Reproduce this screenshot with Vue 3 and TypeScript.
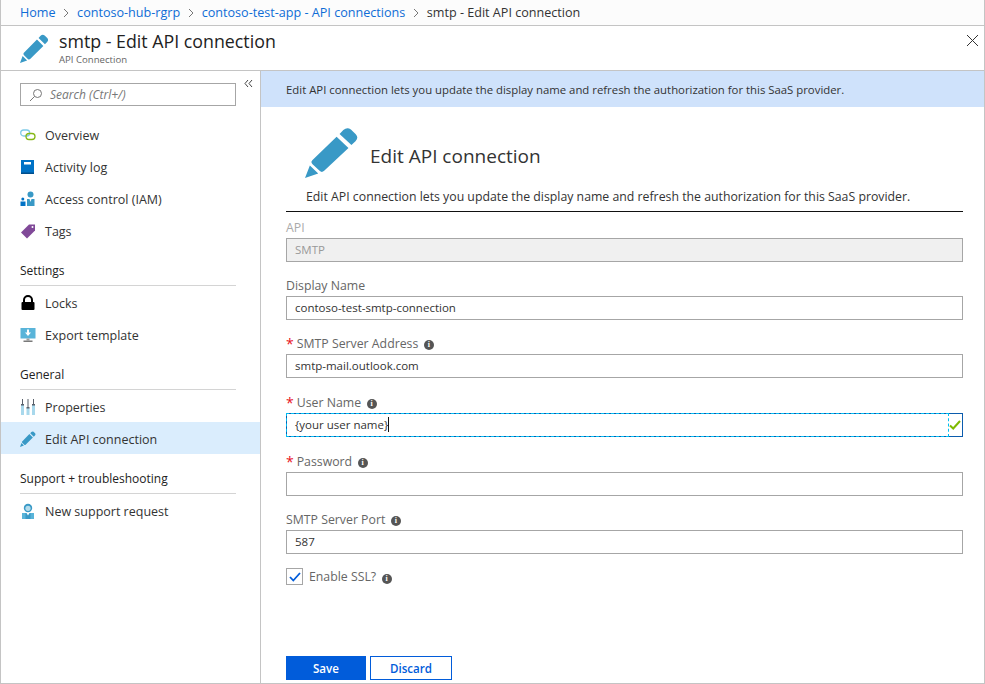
<script setup lang="ts">
const crumbs = ['Home', 'contoso-hub-rgrp', 'contoso-test-app - API connections']
const pencil = 'M14.2 1.2 Q15.6 -0.1 17 1 L18.8 2.8 Q20 4.2 18.7 5.6 L17.2 7.1 L12.8 2.7 Z M11.7 3.8 L16.1 8.2 L7 17.3 Q6.2 18 5.4 17.2 L2.8 14.6 Q2 13.8 2.7 13 Z M1.8 15.1 L4.9 18.2 L0 20 Z'
const fields = [
  { label: 'Display Name', value: 'contoso-test-smtp-connection', req: false, info: false, tight: true },
  { label: 'SMTP Server Address', value: 'smtp-mail.outlook.com', req: true, info: true, tight: true },
]
const fields2 = [
  { label: 'Password', value: '', req: true, info: true, tight: false },
  { label: 'SMTP Server Port', value: '587', req: false, info: true, tight: true },
]
</script>

<template>
  <div class="page">
    <nav class="crumbs">
      <template v-for="c in crumbs" :key="c">
        <a class="crumb">{{ c }}</a>
        <svg class="chev" width="6" height="10" viewBox="0 0 6 10"><path d="M1 1l4 4-4 4" fill="none" stroke="#777" stroke-width="1" /></svg>
      </template>
      <span class="crumb-cur">smtp - Edit API connection</span>
    </nav>
    <header class="head">
      <svg class="head-icon" width="29" height="29" viewBox="0 0 20 20"><path :d="pencil" fill="#3999c6" /></svg>
      <div class="head-text">
        <div class="head-title">smtp - Edit API connection</div>
        <div class="head-sub">API Connection</div>
      </div>
      <svg class="close" width="13" height="13" viewBox="0 0 13 13"><path d="M1 1l11 11M12 1L1 12" stroke="#333" stroke-width="1" fill="none" /></svg>
    </header>
    <div class="body">
      <aside class="side">
        <div class="search-row">
          <div class="search">
            <svg width="14" height="14" viewBox="0 0 14 14"><circle cx="8.5" cy="5.5" r="4" fill="none" stroke="#777" /><path d="M5.5 8.5L1 13" stroke="#777" /></svg>
            <span>Search (Ctrl+/)</span>
          </div>
          <svg class="collapse" width="9" height="9" viewBox="0 0 9 9"><path d="M4 1L1 4.500l3 3.500M8 1L5 4.500l3 3.500" fill="none" stroke="#444" /></svg>
        </div>
        <div class="item first">
          <svg class="ic" width="16" height="16" viewBox="0 0 16 16"><rect x="0.700" y="3" width="9" height="6" rx="3" fill="none" stroke="#7fcbe8" stroke-width="1.300" /><rect x="6" y="6.500" width="9" height="6" rx="3" fill="none" stroke="#86b817" stroke-width="1.300" /></svg>
          <span>Overview</span>
        </div>
        <div class="item">
          <svg class="ic" width="16" height="16" viewBox="0 0 16 16"><rect x="1" y="1" width="13" height="14" fill="#0072c6" /><rect x="1" y="13.500" width="13" height="1.500" fill="#004e8c" /><rect x="4" y="3" width="7" height="2.500" fill="#fff" /></svg>
          <span>Activity log</span>
        </div>
        <div class="item">
          <svg class="ic" width="16" height="16" viewBox="0 0 16 16"><circle cx="10.500" cy="3.500" r="3" fill="#3999c6" /><path d="M7 8h7.500v7H7z" fill="#3999c6" /><path d="M9.500 8h2l-1 3z" fill="#fff" /><circle cx="2.800" cy="8" r="1.500" fill="#0072c6" /><path d="M0.500 10.500h5v4.500h-5z" fill="#0072c6" /></svg>
          <span>Access control (IAM)</span>
        </div>
        <div class="item">
          <svg class="ic" width="16" height="16" viewBox="0 0 16 16"><path d="M1 9.500L9 1.500h6v6L7 15.500z" fill="#804998" /><circle cx="12.500" cy="4" r="1" fill="#fff" /></svg>
          <span>Tags</span>
        </div>

        <div class="group">Settings</div>
        <div class="item">
          <svg class="ic" width="16" height="16" viewBox="0 0 16 16"><path d="M4 7V5a4 4 0 018 0v2" fill="none" stroke="#000" stroke-width="2" /><rect x="1.500" y="7" width="13" height="8" rx="1" fill="#000" /></svg>
          <span>Locks</span>
        </div>
        <div class="item">
          <svg class="ic" width="16" height="16" viewBox="0 0 16 16"><rect x="0.500" y="1" width="15" height="10.500" fill="#59b4d9" /><rect x="6.500" y="11.500" width="3" height="2" fill="#a0a1a2" /><rect x="3.500" y="13.500" width="9" height="1.500" fill="#7a7a7a" /><path d="M7 2.500h2v3h2L8 9 5 5.500h2z" fill="#fff" /></svg>
          <span>Export template</span>
        </div>

        <div class="group">General</div>
        <div class="item">
          <svg class="ic" width="16" height="16" viewBox="0 0 16 16"><path d="M1 6h3v10H1zM6.500 9h3v7h-3zM12 6h3v10h-3z" fill="#a8d8ec" /><path d="M2 0h1v6H2zM7.500 0h1v9h-1zM13 0h1v6h-1z" fill="#59606b" /><path d="M1 5h3v1.500H1zM6.500 8h3v1.500h-3zM12 5h3v1.500h-3z" fill="#59606b" /></svg>
          <span>Properties</span>
        </div>
        <div class="item active">
          <svg class="ic" width="16" height="16" viewBox="0 0 20 20"><path :d="pencil" fill="#3999c6" /></svg>
          <span>Edit API connection</span>
        </div>

        <div class="group">Support + troubleshooting</div>
        <div class="item">
          <svg class="ic" width="16" height="16" viewBox="0 0 16 16"><path d="M2 10h12v6H2z" fill="#59b4d9" /><path d="M5.500 10h5v6h-5z" fill="#3999c6" /><circle cx="8" cy="5" r="4.200" fill="#3999c6" /><circle cx="8" cy="5.300" r="2.600" fill="#b3dcec" /><path d="M6.500 10h3L8 12.500z" fill="#fff" /></svg>
          <span>New support request</span>
        </div>
      </aside>

      <main class="main">
        <div class="banner">Edit API connection lets you update the display name and refresh the authorization for this SaaS provider.</div>
        <div class="form">
          <div class="hero">
            <svg width="54" height="51" viewBox="0 0 20 20" preserveAspectRatio="none"><path :d="pencil" fill="#3999c6" /></svg>
            <h1>Edit API connection</h1>
          </div>
          <p class="desc">Edit API connection lets you update the display name and refresh the authorization for this SaaS provider.</p>

          <div class="field api">
            <div class="label disabled"><span>API</span></div>
            <div class="input ro">SMTP</div>
          </div>

          <div v-for="f in fields" :key="f.label" class="field" :class="{ tight: f.tight }">
            <div class="label">
              <b v-if="f.req" class="star">*</b><span>{{ f.label }}</span>
              <span v-if="f.info" class="info">i</span>
            </div>
            <div class="input">{{ f.value }}</div>
          </div>

          <div class="field">
            <div class="label"><b class="star">*</b><span>User Name</span><span class="info">i</span></div>
            <div class="input focus">
              <div class="focus-in"><span>{your user name}</span><i class="caret"></i></div>
              <svg class="tick" width="12" height="10" viewBox="0 0 12 10"><path d="M1 5.500L4.200 8.500L11 1" fill="none" stroke="#7fba00" stroke-width="2" /></svg>
            </div>
          </div>

          <div v-for="f in fields2" :key="f.label" class="field" :class="{ tight: f.tight }">
            <div class="label">
              <b v-if="f.req" class="star">*</b><span>{{ f.label }}</span>
              <span v-if="f.info" class="info">i</span>
            </div>
            <div class="input">{{ f.value }}</div>
          </div>

          <div class="check-row">
            <span class="box"><svg width="12" height="10" viewBox="0 0 12 10"><path d="M1 5L4.300 8.500L11 1" fill="none" stroke="#015cda" stroke-width="1.800" /></svg></span>
            <span class="check-label">Enable SSL?</span>
            <span class="info low">i</span>
          </div>

          <div class="actions">
            <button class="btn primary" type="button">Save</button>
            <button class="btn" type="button">Discard</button>
          </div>
        </div>
      </main>
    </div>
  </div>
</template>

<style>
html, body { margin: 0; background: #fff; }
</style>

<style scoped>
.page {
  width: 985px; height: 684px; box-sizing: border-box; overflow: hidden;
  display: flex; flex-direction: column; background: #fff;
  border-left: 1px solid #c4c4c4; border-right: 1px solid #c4c4c4; border-bottom: 1px solid #c4c4c4;
  font-family: "Open Sans", "Noto Sans", sans-serif; font-size: 12px; color: #333;
}
.crumbs {
  height: 26px; flex: none; box-sizing: border-box; display: flex; align-items: center;
  padding-left: 19px; border-bottom: 1px solid #c4c4c4; background: #fcfcfc; font-size: 12.600px;
}
.crumb { color: #0f6cd6; }
.crumb-cur { color: #333; }
.chev { margin: 0 8px 0 7.500px; }
.head {
  height: 45px; flex: none; box-sizing: border-box; display: flex; align-items: flex-start;
  padding: 5px 0 0 19px; border-bottom: 1px solid #c4c4c4; position: relative;
}
.head-icon { margin: 3px 10px 0 0; }
.head-title { font-size: 17.800px; line-height: 20px; color: #222; font-weight: 500; }
.head-sub { font-size: 9.600px; line-height: 13px; margin-top: 2px; color: #666; }
.close { position: absolute; right: 5px; top: 8px; }
.body { flex: 1; display: flex; min-height: 0; }
.side { width: 260px; flex: none; box-sizing: border-box; border-right: 1px solid #c4c4c4; }
.search-row { display: flex; padding: 6px 0 0 19px; align-items: flex-start; }
.search {
  width: 216px; height: 23px; box-sizing: border-box; border: 1px solid #a6a6a6; margin-top: 6px;
  display: flex; align-items: center; padding-left: 8px; gap: 7px; color: #777; font-style: italic; font-size: 12px;
}
.collapse { margin: 2px 0 0 8px; }
.item { height: 32px; display: flex; align-items: center; padding-left: 19px; font-size: 12.500px; }
.item.first { margin-top: 13px; }
.item .ic { margin-right: 9px; flex: none; }
.item.active { background: #daedfd; margin-top: -1px; height: 32px; box-sizing: border-box; padding-top: 2px; }
.item.active + .group { margin-top: 10px; }
.group {
  height: 30px; box-sizing: border-box; margin: 9px 24px 1px 19px; padding-top: 5px;
  border-bottom: 1px solid #d4d4d4; font-size: 12px; font-weight: 500; color: #222; line-height: 20px;
}
.main { flex: 1; min-width: 0; }
.banner {
  height: 36px; box-sizing: border-box; background: #cfe2fb; padding-left: 25px;
  display: flex; align-items: center; font-size: 11.370px; color: #333;
}
.form { padding: 20px 21px 0 25px; }
.hero { display: flex; align-items: center; padding-left: 19px; height: 51px; }
h1 { margin: 6px 0 0 11px; font-size: 19px; font-weight: 400; color: #333; }
.desc {
  margin: 10px 0 0; padding: 0 0 3px 20px; height: 20px; line-height: 18px; border-bottom: 1px solid #111;
  font-size: 12.300px; color: #333; white-space: nowrap;
}
.field { height: 44px; }
.field.api { margin-top: 5px; }
.field + .field { margin-top: 15px; }
.field.tight + .field, .field.api + .field, .field + .field.tight.last { margin-top: 14px; }
.field.tight + .field:not(.tight) { margin-top: 15px; }
.field:not(.tight) + .field.tight { margin-top: 14px; }
.label { display: flex; align-items: center; height: 21px; color: #666; font-size: 12.300px; }
.label.disabled { color: #aaa; }
.star { color: #e81123; margin-right: 3px; font-weight: 400; font-size: 14px; line-height: 16px; }
.info {
  width: 10px; height: 10px; border-radius: 50%; background: #555; color: #fff; margin: 2px 0 0 5.500px;
  font: 700 8px/10px "Liberation Serif", serif; text-align: center; display: inline-block;
}
.info.low { margin-top: 4px; }
.input {
  height: 24px; box-sizing: border-box; border: 1px solid #a6a6a6; padding: 0 0 2px 8px;
  display: flex; align-items: center; font-size: 11.500px; color: #333;
}
.input.ro { background: #f0f0f0; color: #999; }
.input.focus { border: 1px solid #0b5cad; padding: 0; position: relative; }
.focus-in {
  flex: 1; height: 100%; box-sizing: border-box; padding: 0 0 2px 8px; display: flex; align-items: center;
  outline: 1px dashed #00bcf2; outline-offset: 0;
}
.caret { width: 1px; height: 15px; background: #111; }
.tick { margin: 0 1px 0 1px; }
.check-row { display: flex; align-items: center; height: 17px; margin-top: 15px; }
.box {
  width: 17px; height: 17px; box-sizing: border-box; border: 1px solid #a6a6a6; display: flex;
  align-items: center; justify-content: center;
}
.check-label { margin-left: 6px; color: #666; font-size: 12.300px; }
.actions { display: flex; gap: 4px; margin-top: 71px; }
.btn {
  height: 24px; width: 82px; box-sizing: border-box; border: 1px solid #015cda; background: #fff; color: #015cda;
  font: 600 11.600px "Open Sans", sans-serif; padding: 0;
}
.btn.primary { width: 80px; background: #015cda; color: #fff; }
</style>
